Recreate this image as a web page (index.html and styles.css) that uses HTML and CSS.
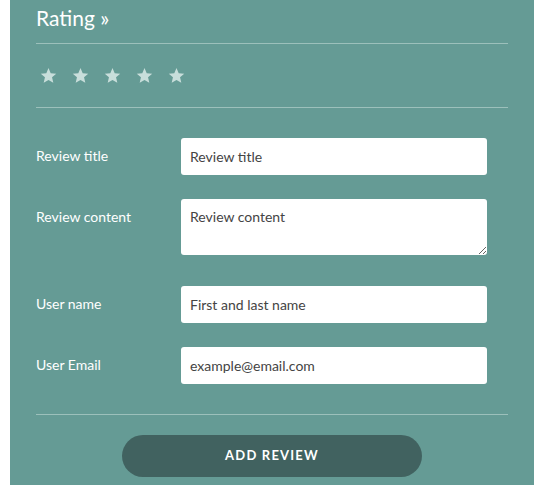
FILE: index.html
```html
<!DOCTYPE html>
<html>
<head>
<meta charset="utf-8">
<link rel="stylesheet" href="styles.css">
</head>
<body>
<div class="panel">
  <h2 class="title">Rating »</h2>
  <div class="stars">
    <svg class="star" viewBox="0 0 24 24"><path d="M12 1.5l3.1 7.2 7.8.7-5.9 5.2 1.8 7.7L12 18.3l-6.8 4 1.8-7.7L1.1 9.4l7.8-.7z"/></svg>
    <svg class="star" viewBox="0 0 24 24"><path d="M12 1.5l3.1 7.2 7.8.7-5.9 5.2 1.8 7.7L12 18.3l-6.8 4 1.8-7.7L1.1 9.4l7.8-.7z"/></svg>
    <svg class="star" viewBox="0 0 24 24"><path d="M12 1.5l3.1 7.2 7.8.7-5.9 5.2 1.8 7.7L12 18.3l-6.8 4 1.8-7.7L1.1 9.4l7.8-.7z"/></svg>
    <svg class="star" viewBox="0 0 24 24"><path d="M12 1.5l3.1 7.2 7.8.7-5.9 5.2 1.8 7.7L12 18.3l-6.8 4 1.8-7.7L1.1 9.4l7.8-.7z"/></svg>
    <svg class="star" viewBox="0 0 24 24"><path d="M12 1.5l3.1 7.2 7.8.7-5.9 5.2 1.8 7.7L12 18.3l-6.8 4 1.8-7.7L1.1 9.4l7.8-.7z"/></svg>
  </div>
  <form class="form">
    <div class="row">
      <label class="label">Review title</label>
      <input class="field" type="text" placeholder="Review title">
    </div>
    <div class="row row-wide">
      <label class="label">Review content</label>
      <textarea class="field area" placeholder="Review content"></textarea>
    </div>
    <div class="row">
      <label class="label">User name</label>
      <input class="field" type="text" placeholder="First and last name">
    </div>
    <div class="row row-last">
      <label class="label">User Email</label>
      <input class="field" type="text" placeholder="example@email.com">
    </div>
    <div class="actions">
      <button type="button" class="btn">ADD REVIEW</button>
    </div>
  </form>
</div>
</body>
</html>
```
FILE: styles.css
```css
html, body {
  margin: 0;
  padding: 0;
  background: #ffffff;
}
body {
  font-family: Lato, "Open Sans", sans-serif;
}
.panel {
  margin-left: 10px;
  width: 524px;
  height: 485px;
  box-sizing: border-box;
  background: #659b95;
  padding: 5px 26px 0;
}
.title {
  margin: 0;
  font-size: 21px;
  font-weight: 400;
  line-height: 25px;
  color: #ffffff;
  padding-bottom: 13px;
  border-bottom: 1px solid #9cc0bb;
}
.stars {
  display: flex;
  gap: 15px;
  padding: 23px 0 23px 4px;
  border-bottom: 1px solid #9cc0bb;
}
.star {
  width: 17px;
  height: 17px;
  fill: #c8dedb;
  display: block;
}
.form {
  padding-top: 30px;
}
.row {
  display: grid;
  grid-template-columns: 145px 306px;
  align-items: start;
  margin-bottom: 24px;
}
.row-wide {
  margin-bottom: 31px;
}
.row-last {
  margin-bottom: 0;
  padding-bottom: 30px;
  border-bottom: 1px solid #9cc0bb;
}
.label {
  color: #ffffff;
  font-size: 14px;
  line-height: 36px;
}
.field {
  display: block;
  box-sizing: border-box;
  width: 306px;
  height: 37px;
  border: none;
  border-radius: 3px;
  background: #ffffff;
  padding: 0 9px 1px;
  margin: 0;
  font-family: Lato, "Open Sans", sans-serif;
  font-size: 14px;
  color: #444;
  outline: none;
}
.field::placeholder {
  color: #444;
  opacity: 1;
}
.area {
  height: 56px;
  padding: 9px 9px 0;
  line-height: 18px;
  resize: vertical;
}
.actions {
  display: flex;
  justify-content: center;
  padding-top: 20px;
}
.btn {
  width: 300px;
  height: 42px;
  border: none;
  border-radius: 21px;
  background: #416260;
  color: #ffffff;
  font-family: Lato, "Open Sans", sans-serif;
  font-size: 13px;
  font-weight: 700;
  letter-spacing: 1.2px;
  line-height: 40px;
  padding: 0 0 2px;
  cursor: pointer;
}
```
